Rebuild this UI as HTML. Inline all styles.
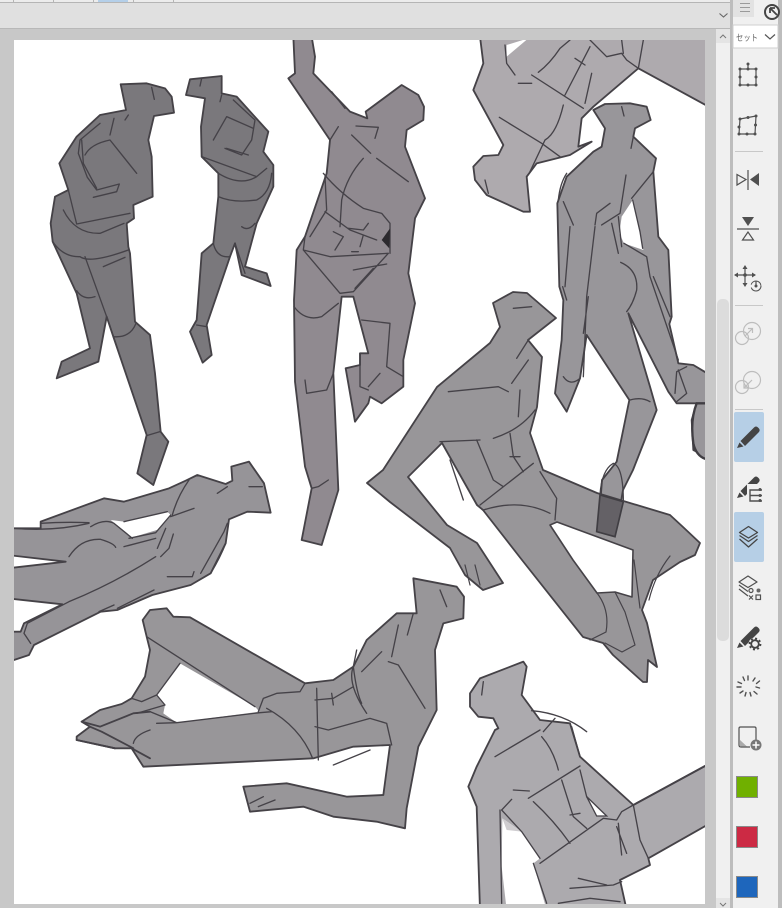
<!DOCTYPE html>
<html><head><meta charset="utf-8">
<style>
html,body{margin:0;padding:0}
body{width:782px;height:908px;overflow:hidden;background:#c8c8c8;position:relative;font-family:"Liberation Sans","Noto Sans CJK JP",sans-serif}
svg{position:absolute;left:0;top:0}
.o{stroke:#454247;stroke-width:5.500;stroke-linejoin:round;stroke-linecap:round}
.l{fill:none;stroke:#454248;stroke-width:4;stroke-linecap:round;stroke-linejoin:round}
.i{fill:none;stroke:#505050;stroke-width:1.2}
.n{fill:#505050}
.d{fill:none;stroke:#bdbdbd;stroke-width:1.2}
</style></head><body>
<svg width="782" height="908" viewBox="0 0 782 908">
<!-- chrome -->
<rect width="782" height="908" fill="#c8c8c8"/>
<rect x="0" y="0" width="732" height="2" fill="#ececec"/>
<rect x="98" y="0" width="30" height="2" fill="#b4cfe9"/>
<g fill="#b5b5b5"><rect x="13" y="0" width="1" height="2"/><rect x="53" y="0" width="1" height="2"/><rect x="93" y="0" width="1" height="2"/><rect x="133" y="0" width="1" height="2"/><rect x="173" y="0" width="1" height="2"/></g>
<rect x="0" y="2" width="732" height="1" fill="#b5b5b5"/>
<rect x="0" y="3" width="732" height="25" fill="#e0e0e0"/>
<rect x="0" y="28" width="732" height="1" fill="#b8b8b8"/>
<path d="M719.500 13.500L723.500 17L727.500 13.500" fill="none" stroke="#666" stroke-width="1.100"/>
<rect x="14" y="40" width="691" height="864" fill="#fff"/>
<!-- scrollbar -->
<rect x="716" y="29" width="14" height="879" fill="#f0f0f0"/>
<rect x="716" y="29" width="14" height="14" fill="#e4e4e4"/>
<path d="M720 38L723 35L726 38" fill="none" stroke="#777" stroke-width="1"/>
<rect x="717" y="299" width="12" height="342" rx="5" fill="#dcdcdc"/>
<rect x="716" y="898" width="14" height="10" fill="#e4e4e4"/>
<path d="M720 903L723 906L726 903" fill="none" stroke="#777" stroke-width="1"/>
<!-- panel -->
<rect x="730" y="0" width="3" height="908" fill="#bdbdbd"/>
<rect x="733" y="0" width="45" height="908" fill="#f0f0f0"/>
<rect x="778" y="0" width="4" height="908" fill="#bdbdbd"/>

<svg x="14" y="40" width="691" height="864" viewBox="14 40 691 864">
<!-- figure 1 -->
<g transform="translate(0,40) scale(.33333)">
<path class="o" fill="#7a787c" d="M362 133L440 130L495 145L515 170L522 218L462 228L445 300L455 350L458 470L400 495L402 535L380 550L385 620L390 640L405 845L450 885L465 1000L482 1175L505 1205L460 1335L412 1300L440 1185L340 890L320 830L295 965L170 1015L185 965L270 925L230 760L158 605L152 550L165 470L205 450L178 370L230 290L300 225L378 210Z"/>
<path class="l" d="M455 142L463 178M385 225L375 240M342 235L330 285M300 250L240 300L235 340L262 412L290 450L358 432L350 455L280 472M245 300L250 370L290 445M255 345Q272 312 330 300L410 400M205 450L230 552L390 520M190 510Q225 582 300 580L372 550M158 605Q190 652 240 650Q270 672 385 630M310 680L375 652M255 650L320 830M340 890Q390 895 408 850M230 752Q250 782 285 770M440 1187L480 1175"/>
</g>
<!-- figure 2 -->
<g transform="translate(0,40) scale(.33333)">
<path class="o" fill="#7a787c" d="M558 165L570 118L665 108L665 160L710 170L805 275L790 335L820 375L820 440L770 550L735 680L800 700L812 738L725 705L705 610L690 650L620 855L635 945L608 968L570 875L590 840L605 640L640 610L655 470L655 400L605 350L603 260L615 175Z"/>
<path class="l" d="M605 115L600 138M665 165L660 185M700 180L765 240L755 300L725 345L675 325M640 300L680 230L760 265M745 345L680 325M605 350L770 410L800 385M655 400Q720 440 770 410M655 470Q700 490 770 480Q810 460 815 400M725 560Q745 575 765 550M705 610L735 700M640 610Q650 655 690 650M590 855L620 860"/>
</g>
<!-- figure 4 -->
<g transform="translate(470,40) scale(.33333)">
<path class="o" fill="#aeaaae" d="M30 -10L725 -10L725 205L505 85L370 200L335 235L325 320L365 305L300 345L200 370L170 410L180 515L160 515L50 465L15 420L10 380L40 348L85 345L100 315L10 150L40 70Z"/>
<path fill="#fff" d="M110 15L175 -5L110 50ZM385 90L420 55L365 110Z"/>
<path class="l" d="M105 15L110 70L135 105M145 130H185M185 105L340 205M88 232L215 310L270 350M280 195Q260 280 225 300L180 395M205 97Q240 70 270 25L300 0M360 20L285 165M315 55L345 75M365 100L345 190M360 0L410 50L455 40L470 60L505 85M455 0L460 40M520 0L505 85M45 420L55 460"/>
</g>
<!-- figure 5 -->
<g transform="translate(550,100) scale(.33333)">
<path class="o" fill="#98969a" d="M130 30L165 12L240 10L290 20L302 60L255 85L250 110L318 175L310 215L325 410L355 450L365 650L358 672L385 790L430 795L480 825L480 1075L430 1050L425 960L440 910L380 910L355 875L235 640L300 860L320 930L249 1110L219 1170L195 1311L144 1299L156 1140L200 1085L238 900L110 705L90 835L50 935L15 880L35 720L40 600L28 560L22 310L50 230L130 155L155 140L165 85Z"/>
<path fill="#fff" d="M248 300L270 395L280 450L222 430L208 400L215 350Z"/>
<path class="l" d="M248 300L270 395L278 445M215 20L222 48M250 110L243 145M228 225L210 340L155 375M180 310L140 340L135 375M40 305L70 375M135 380L110 590L100 830M60 380L45 560M185 370L205 460M205 350L215 440M222 430L290 470L300 530M212 487Q265 510 260 570Q250 610 230 635M38 560L50 600M40 830Q60 860 90 835M240 900Q275 890 300 905M310 530L360 650M300 530L385 780M385 810L410 880L380 905M410 800L380 815L375 880M50 220Q30 250 25 300M245 295L310 215M100 700L115 590"/>
<path fill="#98969a" stroke="#403e43" stroke-width="7" d="M440 910Q420 960 430 1030Q440 1075 480 1080L480 910Z"/>
</g>
<!-- figure 3 -->
<g transform="translate(280,40) scale(.33333)">
<path class="o" fill="#908a90" d="M40 -10L95 -10L105 50L100 100L210 215L262 235L257 215L365 135L415 165L432 200L430 240L380 270L375 320L435 475L405 535L385 700L405 790L370 960L370 1040L305 1090L270 1070L265 1090L225 1145L197 985L240 975L240 940L265 940L220 770L185 770L160 1000L175 1350L125 1515L65 1500L95 1345L75 1280L45 1025L42 780L50 630L75 590L140 400L150 300L25 115L45 100Z"/>
<path class="l" d="M228 258L295 262L285 295M215 285L272 340M290 355L385 425M250 355Q200 410 185 480L180 560M130 400Q180 460 250 505L305 520L330 550L330 640M135 410L140 510L90 590M135 515L210 570L290 600M160 575L190 590L165 630M205 565L250 570L265 550M250 585L240 620M215 635L235 635M75 590L70 630L180 760L220 755L325 640M70 630L150 650L325 640M220 690L320 672M225 745L280 685M42 800Q75 845 125 830L175 790M245 840L330 850L320 980L370 1010M75 1020L80 1060L140 1050L160 1000M150 300L175 260M95 1345L115 1340L145 1320M155 155L195 205M240 940L240 1040L265 1050M265 1040L300 1000"/>
<path d="M305 600L330 565L328 625Z" fill="#2c2a2e"/>
</g>
<!-- figure 6 (real coords) -->
<path fill="#989699" stroke="#454247" stroke-width="1.800" stroke-linejoin="round" d="M493 303L513 292L527 293L556 318L528 340L542 357L537 407L530 433L543 470L597 493L670 515L683 527L700 543L695 555L680 562L653 580L642 610L647 623L657 667L648 660L647 682L643 682L613 655L603 643L583 637L522 560L483 510L477 505L442 443L408 477L447 525L477 543L503 583L483 590L465 575L450 548L390 502L367 483L383 470L437 387L490 343L500 327Z"/>
<path fill="#fff" stroke="#454247" stroke-width="1.600" stroke-linejoin="round" d="M550 525L557 522L633 550L632 597L615 592L597 593L573 560Z"/>
<g transform="translate(280,40) scale(.33333)">
<path class="l" d="M505 1055L655 1040L685 1055M745 900L710 955M745 960L695 1030M720 1050L715 1130M765 1110Q720 1170 640 1195M590 1200L640 1320L670 1340M690 1180L700 1250L730 1295M690 1250L720 1250M600 1395L760 1270M610 1410Q720 1375 810 1420M780 1295L830 1375L825 1440M480 1205L600 1200M510 1260L550 1380M700 805L755 800"/>
<path fill="#646166" stroke="#403e43" stroke-width="5" d="M960 1365L1030 1385L1005 1490L950 1475Z"/>
<path class="l" d="M960 1365Q965 1290 1000 1270Q1030 1280 1030 1385"/>
</g>
<path class="l" style="stroke-width:1.200" d="M615 592L625 612L635 645L622 652L605 643M597 593Q610 610 606 632L590 640M475 565L480 585M465 565L470 585M640 608L634 560M649 600Q655 575 670 556"/>
<!-- figure 7 -->
<g transform="translate(14,460) scale(.33333)">
<path class="o" fill="#969498" d="M515 62L550 45L635 72L655 62L652 20L705 5L750 70L770 158L700 155L645 178L635 250L590 340L530 375L415 405L310 450L260 455L60 555L45 585L0 600L-20 600L-20 515L20 515L30 490L145 433L-20 415L-20 325L155 305L-20 285L-20 205L80 205L80 185L270 115L330 125L465 85Z"/>
<path fill="#fff" d="M290 180L330 185L460 155L470 165L435 208L355 232Z"/>
<path class="l" d="M330 185L460 155M0 205Q120 215 225 190M80 190Q150 185 225 188M230 200Q270 175 300 190L355 235M345 235L425 218M330 260L425 235M165 290Q200 235 260 238Q300 250 305 262M470 170L540 145M475 165Q490 110 525 60M455 205L430 265M478 222L465 265L440 290M425 290Q300 370 165 425L40 490L30 520L50 550M460 350H535L540 335M560 340L630 215L640 190M590 340Q620 290 635 250M610 100L640 80M705 80H745M310 445L420 390M255 455L300 435M425 218L470 165"/>
</g>
<!-- figure 8 -->
<g transform="translate(0,450) scale(.33333)">
<path class="o" fill="#989699" d="M1240 385L1370 410L1392 440L1390 505L1330 520L1305 600L1310 780L1255 890L1220 1075L1215 1135L1130 1115L1000 1100L910 1070L750 1085L730 1010L860 1000L1040 1040L1150 1035L1170 885L1060 890L940 925L430 950L395 895L345 895L230 870L230 860L270 830L245 815L300 780L365 762L395 745L435 680L450 600L440 560L428 510L450 480L500 475L520 500L570 502L915 700L1000 690L1060 650L1100 570L1190 490L1250 490Z"/>
<path fill="#fff" d="M540 640L765 770L778 785L530 818L490 790L495 765L470 735Z"/>
<path class="l" d="M440 560L765 770M540 640L470 735L495 765L410 790M395 745L425 755L470 735M530 818L780 788L815 785M775 785L790 745L830 730L900 725L915 700M800 775Q900 830 938 925M950 715L955 930M945 750L1000 745L1060 710M995 730L1000 765M945 830L985 840L1110 805L1160 820L1175 885M1060 650Q1040 700 1100 790M1070 600L1060 650Q1070 730 1085 760M1085 665L1145 605M1195 525L1175 620M1240 490L1222 555M1165 635L1195 645L1275 775M1320 420L1340 470M400 880Q405 855 450 840M1000 945L1110 900M750 1060L790 1040M775 1070L825 1050M470 820L530 818M450 785L530 818"/>
<path class="l" style="stroke-width:5.500" d="M245 815L300 830L400 790L450 785M230 870L345 895M305 845L400 895M270 830L305 845M395 895L450 925"/>
</g>
<!-- figure 9 -->
<g transform="translate(440,560) scale(.33333)">
<path class="o" fill="#acaaae" d="M90 400L120 355L250 305L260 320L245 405L300 480L390 490L420 590L580 735L810 610L810 790L625 895L630 915L540 960L560 1050L120 1050L110 740L85 680L110 620L165 510L175 505L160 475L115 470L90 440Z"/>
<path fill="#fff" d="M187 775L245 815L300 895L280 910L320 1050L200 1050L185 920Z"/>
<path fill="#cfcdd0" d="M187 775L245 815L200 810Z"/>
<path fill="#fff" stroke="#454248" stroke-width="4" d="M440 710L470 768L500 768Z"/>
<path class="l" d="M275 452Q370 460 440 515M130 365L125 405M165 590L300 510M310 515L345 475M305 530Q340 570 355 630M395 500L420 590M265 715L420 618M220 690L268 693M215 718L185 750L245 815L300 895M180 750L185 1030M280 725Q340 780 390 850M365 660L400 770L440 805M420 630L440 710M390 765L420 760M300 910L490 775L530 780L545 755L580 735L600 840L625 895M535 790L545 885M530 800L560 880M390 985L520 975L545 965M415 955L500 975M355 1030L450 1015L540 1025M280 910L320 1030"/>
<path class="l" style="stroke-width:5.500" d="M580 735L800 615"/>
</g>
</svg>

<!-- panel controls -->
<rect x="733" y="0" width="21" height="17" fill="#e2e2e2"/>
<path d="M740 3.500H750M740 7.500H750M740 11.500H750" stroke="#9a9a9a" stroke-width="1"/>
<circle cx="772" cy="12" r="7" fill="none" stroke="#454545" stroke-width="2"/>
<path d="M770 8L777 15M770 8H775M770 8V13" fill="none" stroke="#454545" stroke-width="1.800"/>
<rect x="733" y="25" width="45" height="23" fill="#fff" stroke="#cfcfcf" stroke-width="1"/>
<text x="736" y="41" font-size="9" textLength="22" lengthAdjust="spacingAndGlyphs" fill="#666" font-family="Liberation Sans, Noto Sans CJK JP, sans-serif">セット</text>
<path d="M765 34.500L770 39L775 34.500" fill="none" stroke="#555" stroke-width="1.200"/>
<!-- transform -->
<rect class="i" x="740" y="69" width="16" height="16"/>
<path class="i" d="M748 64V69"/>
<g class="n"><circle cx="748" cy="64" r="1.500"/><circle cx="740" cy="69" r="1.500"/><circle cx="748" cy="69" r="1.500"/><circle cx="756" cy="69" r="1.500"/><circle cx="740" cy="77" r="1.500"/><circle cx="756" cy="77" r="1.500"/><circle cx="740" cy="85" r="1.500"/><circle cx="748" cy="85" r="1.500"/><circle cx="756" cy="85" r="1.500"/></g>
<path class="i" d="M740 119L756 116L755 134H739Z"/>
<g class="n"><circle cx="740" cy="119" r="1.500"/><circle cx="748" cy="117.500" r="1.500"/><circle cx="756" cy="116" r="1.500"/><circle cx="739" cy="127" r="1.500"/><circle cx="755.500" cy="125" r="1.500"/><circle cx="739" cy="134" r="1.500"/><circle cx="747" cy="134" r="1.500"/><circle cx="755" cy="134" r="1.500"/></g>
<rect x="735" y="151" width="28" height="1" fill="#c8c8c8"/>
<path class="i" d="M737 174.500L746 179.500L737 185ZM748 170V190"/>
<path class="n" d="M759 173V186L750 179.500Z"/>
<path class="n" d="M742 217H754L748 226Z"/>
<path d="M737 229H759" stroke="#505050" stroke-width="1.200"/>
<path class="i" d="M748 232L742.500 240H753.500Z"/>
<path class="i" d="M745 267V285M735 275H755"/>
<path class="n" d="M745 265L742.500 269H747.500ZM745 287L742.500 283H747.500ZM734 275L738 272.500V277.500ZM756 275L752 272.500V277.500Z"/>
<circle cx="745" cy="275" r="1.800" fill="#505050"/>
<circle cx="756" cy="286" r="5" fill="#f0f0f0" stroke="#505050" stroke-width="1" stroke-dasharray="14 3"/>
<circle cx="756" cy="286" r="1.500" fill="#505050"/><path class="i" d="M756 286V281"/>
<rect x="735" y="305" width="28" height="1" fill="#c8c8c8"/>
<circle class="d" cx="752" cy="331" r="8.500"/><circle class="d" cx="742" cy="338" r="6.500"/>
<path class="d" d="M745 336L752 329M748 328.500H752.500V333"/>
<circle class="d" cx="752" cy="380" r="8.500"/><circle class="d" cx="742" cy="387" r="6.500"/>
<path class="d" d="M752 380L744 388M744 383.500V388H748.500"/>
<rect x="735" y="409" width="28" height="1" fill="#c8c8c8"/>
<rect x="734" y="412" width="30" height="50" rx="2" fill="#b6cfe6"/>
<path fill="#444" d="M740.500 441L754 427.500Q756 425.500 758 427.500L759 428.500Q760.500 430.500 758.500 432.500L745 446Z"/>
<path fill="#444" d="M737 448L739.500 442.500L743.500 446.500Z"/>
<path fill="#444" d="M740.500 491L754 477.500Q756 475.500 758 477.500L759 478.500Q760.500 480.500 758.500 482.500L745 496Z"/>
<path fill="#444" d="M737 498L739.500 492.500L743.500 496.500Z"/>
<rect x="747" y="484" width="16" height="18" fill="#f0f0f0"/>
<path class="i" d="M762 490H750V501H762M750 495.500H762" style="stroke-width:1.400"/>
<g class="n"><circle cx="760" cy="489.500" r="1.500"/><circle cx="760" cy="495.500" r="1.500"/><circle cx="760" cy="500.500" r="1.500"/></g>
<rect x="734" y="512" width="30" height="50" rx="2" fill="#b6cfe6"/>
<g fill="none" stroke="#454545" stroke-width="1.300" stroke-linejoin="round"><path d="M748.500 526.500L757.500 532.500L748.500 538L739.500 532.500Z"/><path d="M739.500 535.500L748.500 541.500L757.500 535.500"/><path d="M739.500 539L748.500 547L757.500 539"/></g>
<g fill="none" stroke="#505050" stroke-width="1.200" stroke-linejoin="round"><path d="M748 576L757 582L748 587.500L739 582Z"/><path d="M739 585L748 591.500M739 589L748 596"/></g>
<circle cx="758.500" cy="590.500" r="2" fill="#666"/><circle class="i" cx="751" cy="590.500" r="2"/><path class="i" d="M749 595.500L753 599.500M753 595.500L749 599.500"/><rect class="i" x="756" y="595" width="4.500" height="4.500"/>
<path fill="#444" d="M740.500 641L754 627.500Q756 625.500 758 627.500L759 628.500Q760.500 630.500 758.500 632.500L745 646Z"/>
<path fill="#444" d="M737 648L739.500 642.500L743.500 646.500Z"/>
<circle cx="755" cy="644" r="6.500" fill="#f0f0f0"/>
<circle cx="755" cy="644" r="3.800" fill="none" stroke="#444" stroke-width="1.800"/>
<circle cx="755" cy="644" r="5.500" fill="none" stroke="#444" stroke-width="1.800" stroke-dasharray="2 2.300"/>
<g stroke="#505050" stroke-width="1.400" stroke-linecap="round"><path d="M748 676V680M755 678L753 681M759.500 681L756.500 683.500M759.500 688L756 687M757 694L754 691.500M751 696L750 692.500M745 696L746 692.500M740 693L743 691M737 687L741 687M738 682L741.500 683.500M743 677L744.500 680.500"/></g>
<path fill="none" stroke="#505050" stroke-width="1.200" d="M756 740V728.500Q756 727 754.500 727H740.500Q739 727 739 728.500V745Q739 747 741 747H750"/>
<path d="M740 740L747 746.500H740Z" fill="#aaa"/>
<circle cx="756" cy="745" r="5.500" fill="#777"/>
<path d="M752.500 745H759.500M756 741.500V748.500" stroke="#fff" stroke-width="1.500"/>
<rect x="736.500" y="776.500" width="21" height="21" fill="#70b000" stroke="#8a8a8a"/>
<rect x="736.500" y="826.500" width="21" height="21" fill="#cc2a44" stroke="#8a8a8a"/>
<rect x="736.500" y="876.500" width="21" height="21" fill="#1e66bc" stroke="#8a8a8a"/>
</svg>
</body></html>
